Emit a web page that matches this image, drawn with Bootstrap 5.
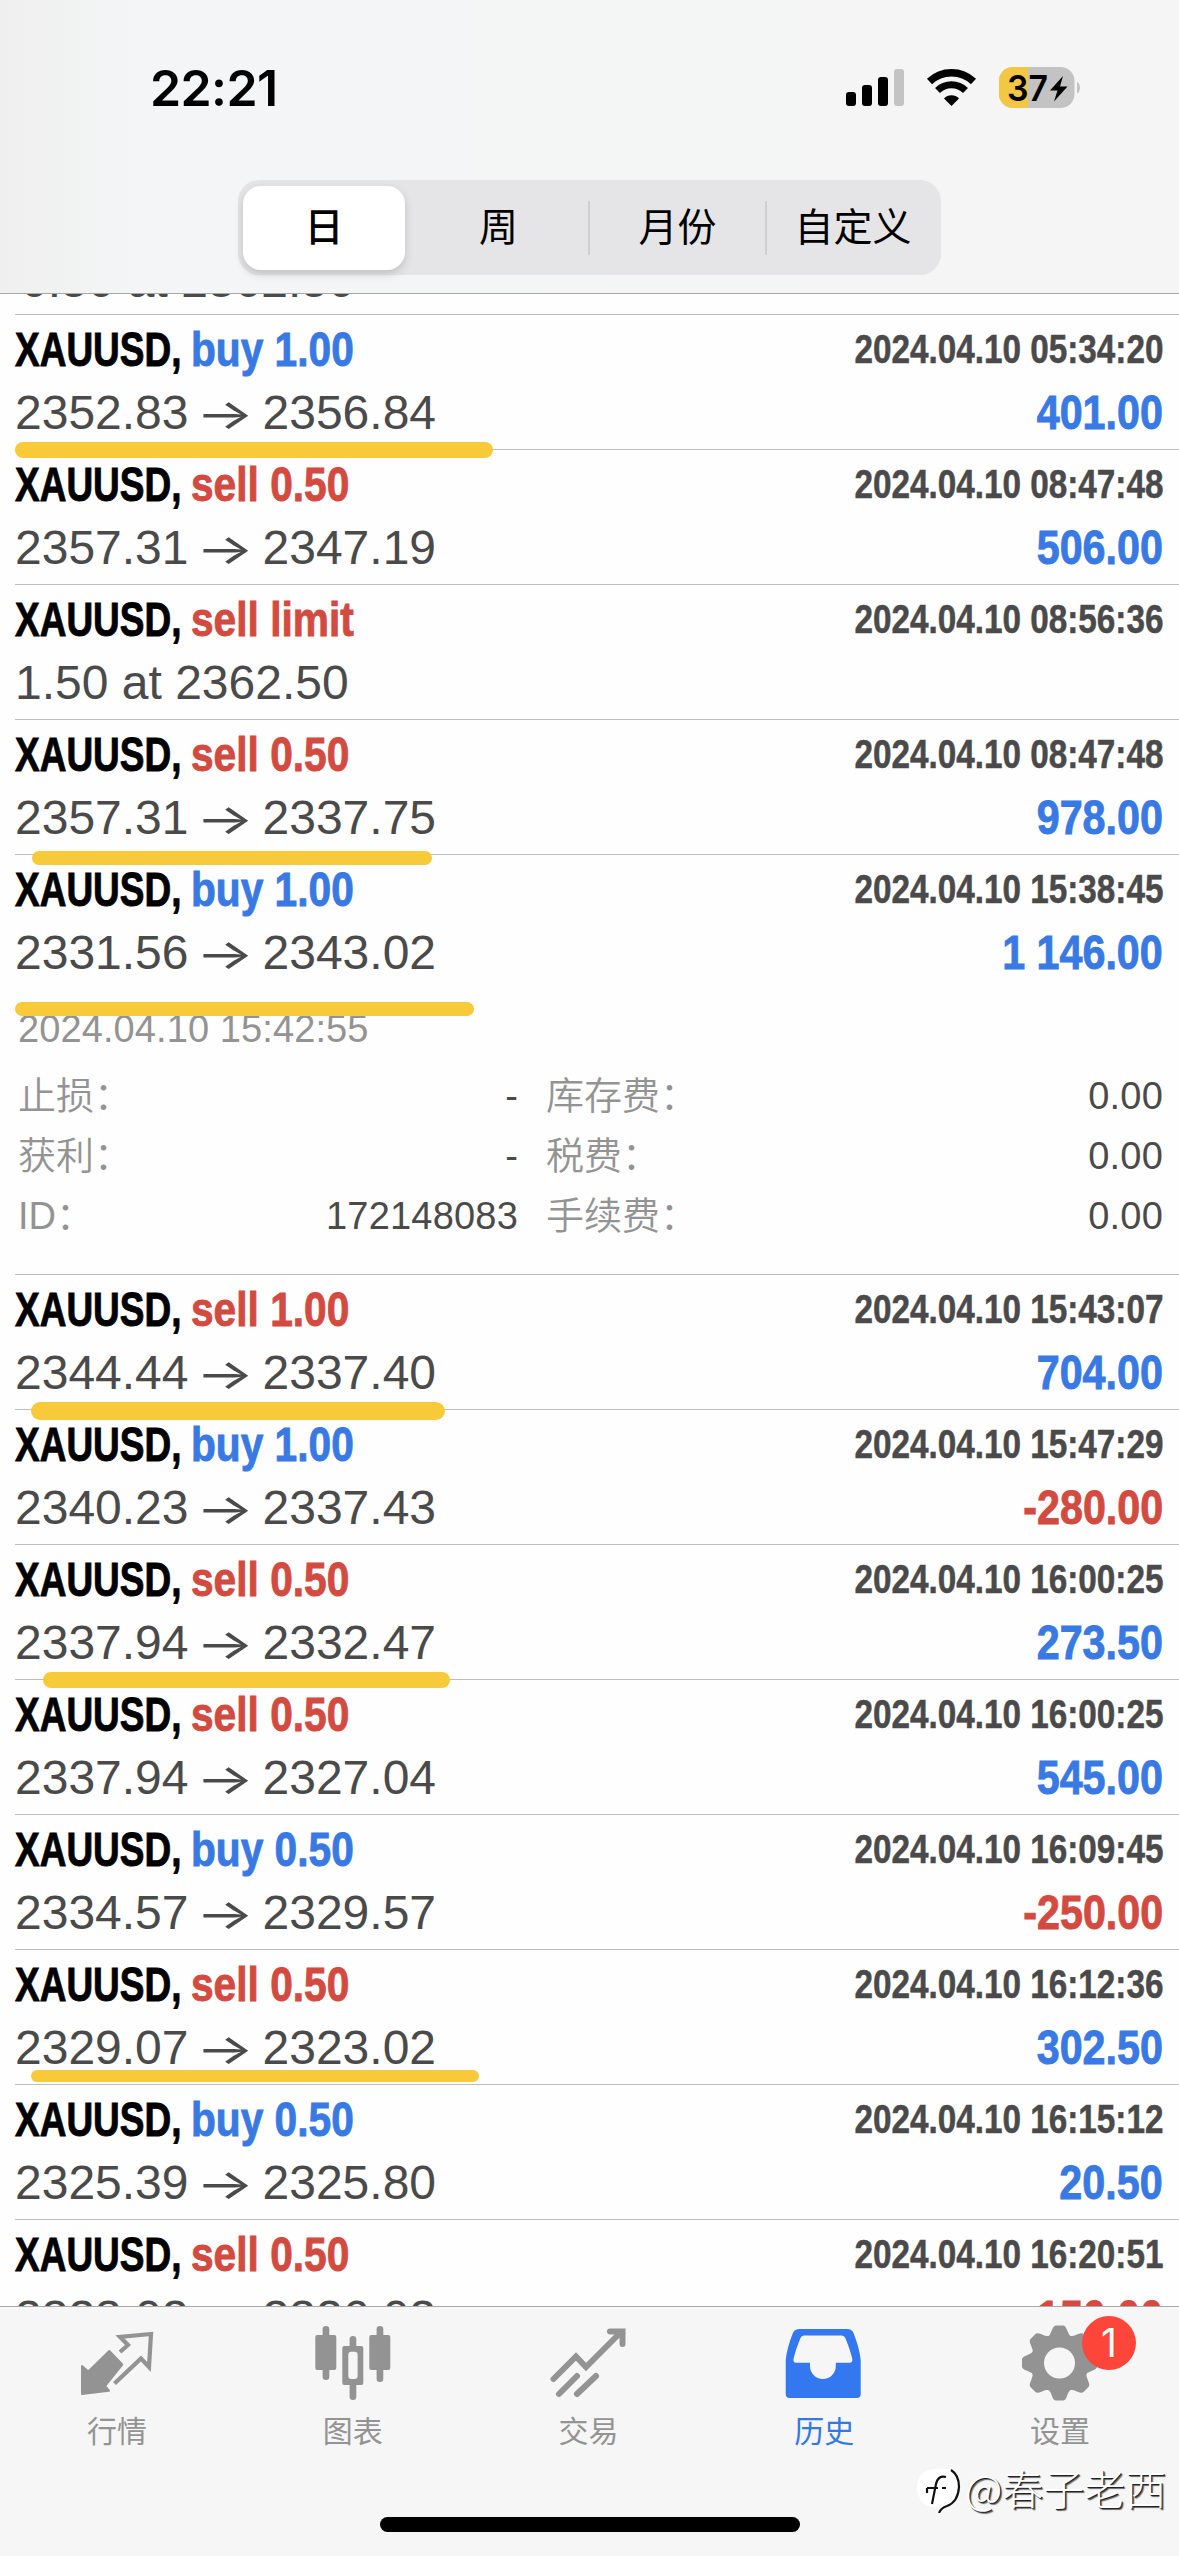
<!DOCTYPE html>
<html lang="zh-CN">
<head>
<meta charset="utf-8">
<title>历史</title>
<link href="https://cdn.jsdelivr.net/npm/bootstrap@5.3.0/dist/css/bootstrap.min.css" rel="stylesheet">
<style>
html,body{height:2556px;overflow:hidden}
body{width:1179px;margin:0;background:#fefefe;font-family:"Liberation Sans","Noto Sans CJK SC",sans-serif;color:#4a4a4a}
.app-top{height:294px;background:linear-gradient(90deg,#efefef,#f4f5f6 12%,#f5f5f5);border-bottom:1px solid #a9a9a9;position:relative;z-index:3;flex:none}
.status{height:180px;padding:66px 99px 0 150px}
.clock{font:600 50px/44px Inter,sans-serif;color:#000;letter-spacing:-.6px}
.sicons{margin-right:-4px}
.bat{font:600 36px Inter,sans-serif}
.seg{width:703px;height:95px;margin-left:238px;padding-left:5px;border-radius:21px;background:#e5e5e7}
.seg div{flex:none;height:84px;line-height:77px;text-align:center;font-size:39px;color:#000;font-family:"Noto Sans CJK SC",sans-serif}
.seg .on{width:162px;margin-right:4px;background:#fff;border-radius:18px;box-shadow:0 4px 10px rgba(0,0,0,.16);font-weight:500}
.s2{width:179px}.s3{width:175px}.s4{width:172px}
.seg i{flex:none;width:2px;height:54px;background:#cfcfd2}
.feed{height:2012px;overflow:hidden;flex:none}
.peek{height:40px;margin:-34px 0 14px 21px}
.deal{height:135px;margin-left:15px;padding:14px 16px 0 0;border-top:1px solid #bdbdbd;position:relative}
.ttl{height:40px}
.val{height:60px;margin-top:23px}
.deal.open{height:420px}
.t{font-size:49px;line-height:40px;font-weight:700;white-space:nowrap;color:#000;-webkit-text-stroke:.9px currentColor}
.t span{display:inline-block;transform-origin:0 50%}
.sy{width:176px;transform:scaleX(.755)}
.k{transform:scaleX(.83)}
.buy{color:#3879e3}.sell{color:#d24a40}
.dt{font-size:40px;line-height:40px;font-weight:700;transform:scaleX(.832);transform-origin:100% 50%;white-space:nowrap;-webkit-text-stroke:.5px currentColor}
.pr{font-size:48px;line-height:42px;white-space:pre}
.ar{font:400 42px/40px Inter,sans-serif;display:inline-block;width:74px;text-align:center;transform:translateX(-1px) scaleX(1.46)}
.pl{font-size:49px;line-height:41px;font-weight:700;transform:scaleX(.842);transform-origin:100% 50%;white-space:nowrap;-webkit-text-stroke:.9px currentColor}
.hl{position:absolute;border-radius:9px;background:#f8ca3a;z-index:2}
.h1a{left:0;top:127px;width:478px;height:16px}
.h2a{left:17px;top:131px;width:400px;height:14px}
.h3a{left:0;top:147px;width:459px;height:14px}
.h4a{left:16px;top:127px;width:414px;height:18px}
.h5a{left:28px;top:127px;width:407px;height:16px}
.h6a{left:16px;top:120px;width:448px;height:12px}
.more{font-size:38px;font-weight:350;color:#939393;padding:15px 0 0 3px}
.cl{line-height:44px;height:44px;margin-bottom:15px;font-weight:400;letter-spacing:.1px}
.ln{height:60px;line-height:60px}
.more b{font-weight:400;color:#4a4a4a;letter-spacing:.2px}
.c1{width:500px}.c2{width:617px;margin-left:28px}
.tabs{height:250px;background:#f6f6f6;border-top:1px solid #a9a9a9;position:relative;flex:none}
.tab{width:235.8px;color:#939393;font:400 30px/36px "Noto Sans CJK SC",sans-serif;padding-top:13px}
.tab svg{width:84px;height:84px;display:block;margin-bottom:7px}
.tab span{margin-left:-2px}
.tab.cur{color:#3478e8}
.num{position:absolute;left:1082px;top:9px;width:54px;height:54px;border-radius:50%;background:#fd453a;color:#fff;font:400 39px/54px Inter,sans-serif;text-align:center}
.home{position:absolute;left:380px;top:210px;width:420px;height:15px;border-radius:8px;background:#000}
.wm{position:absolute;left:913px;top:154px;color:#fff;font:300 41px/52px "Noto Sans CJK SC",sans-serif;text-shadow:1px 1px 0 #222,2px 2px 1px #666;white-space:nowrap}
</style>
</head>
<body class="d-flex flex-column">
<header class="app-top">
<div class="status d-flex justify-content-between align-items-start">
<div class="clock">22:21</div>
<svg class="sicons" width="244" height="46" viewBox="0 0 244 46">
<rect x="6" y="26" width="10" height="14" rx="3"/><rect x="22" y="19" width="10" height="21" rx="3"/><rect x="38" y="11" width="10" height="29" rx="3"/><rect x="54" y="3" width="10" height="37" rx="3" fill="#c3c3c3"/>
<path d="M89.5 15.5a32 32 0 0 1 44 0" fill="none" stroke="#000" stroke-width="7.4"/>
<path d="M97.5 24.5a20 20 0 0 1 28 0" fill="none" stroke="#000" stroke-width="7"/>
<path d="M111.500 40l-7.500-7.600a10.500 10.500 0 0 1 15 0z"/>
<clipPath id="bc"><rect x="159" y="1" width="75.500" height="41" rx="14"/></clipPath>
<g clip-path="url(#bc)"><rect x="158" y="0" width="80" height="44" fill="#c3c3c3"/><rect x="158" y="0" width="30" height="44" fill="#f3c743"/></g>
<path d="M237 16c4 1.500 4 10 0 11.500z" fill="#c3c3c3"/>
<text class="bat" x="167" y="34.500" textLength="41" lengthAdjust="spacingAndGlyphs">37</text>
<path d="M223 10l-13 14.500h7.500l-3.500 11 13.500-15h-7.500z"/>
</svg>
</div>
<div class="seg d-flex align-items-center"><div class="on">日</div><div class="s2">周</div><i></i><div class="s3">月份</div><i></i><div class="s4">自定义</div></div>
</header>
<main class="feed">
<div class="peek pr">0.50 at 2362.50</div>
<section class="deal"><div class="ttl d-flex justify-content-between"><div class="t"><span class="sy">XAUUSD,</span><span class="k buy">buy 1.00</span></div><div class="dt">2024.04.10 05:34:20</div></div><div class="val d-flex justify-content-between"><div class="pr">2352.83<span class="ar">→</span>2356.84</div><div class="pl buy">401.00</div></div><div class="hl h1a"></div></section>
<section class="deal"><div class="ttl d-flex justify-content-between"><div class="t"><span class="sy">XAUUSD,</span><span class="k sell">sell 0.50</span></div><div class="dt">2024.04.10 08:47:48</div></div><div class="val d-flex justify-content-between"><div class="pr">2357.31<span class="ar">→</span>2347.19</div><div class="pl buy">506.00</div></div></section>
<section class="deal"><div class="ttl d-flex justify-content-between"><div class="t"><span class="sy">XAUUSD,</span><span class="k sell">sell limit</span></div><div class="dt">2024.04.10 08:56:36</div></div><div class="val d-flex justify-content-between"><div class="pr">1.50 at 2362.50</div></div></section>
<section class="deal"><div class="ttl d-flex justify-content-between"><div class="t"><span class="sy">XAUUSD,</span><span class="k sell">sell 0.50</span></div><div class="dt">2024.04.10 08:47:48</div></div><div class="val d-flex justify-content-between"><div class="pr">2357.31<span class="ar">→</span>2337.75</div><div class="pl buy">978.00</div></div><div class="hl h2a"></div></section>
<section class="deal open"><div class="ttl d-flex justify-content-between"><div class="t"><span class="sy">XAUUSD,</span><span class="k buy">buy 1.00</span></div><div class="dt">2024.04.10 15:38:45</div></div><div class="val d-flex justify-content-between"><div class="pr">2331.56<span class="ar">→</span>2343.02</div><div class="pl buy">1 146.00</div></div><div class="hl h3a"></div>
<div class="more">
<div class="cl">2024.04.10 15:42:55</div>
<div class="ln d-flex"><div class="c1 d-flex justify-content-between"><span>止损：</span><b>-</b></div><div class="c2 d-flex justify-content-between"><span>库存费：</span><b>0.00</b></div></div>
<div class="ln d-flex"><div class="c1 d-flex justify-content-between"><span>获利：</span><b>-</b></div><div class="c2 d-flex justify-content-between"><span>税费：</span><b>0.00</b></div></div>
<div class="ln d-flex"><div class="c1 d-flex justify-content-between"><span>ID：</span><b>172148083</b></div><div class="c2 d-flex justify-content-between"><span>手续费：</span><b>0.00</b></div></div>
</div></section>
<section class="deal"><div class="ttl d-flex justify-content-between"><div class="t"><span class="sy">XAUUSD,</span><span class="k sell">sell 1.00</span></div><div class="dt">2024.04.10 15:43:07</div></div><div class="val d-flex justify-content-between"><div class="pr">2344.44<span class="ar">→</span>2337.40</div><div class="pl buy">704.00</div></div><div class="hl h4a"></div></section>
<section class="deal"><div class="ttl d-flex justify-content-between"><div class="t"><span class="sy">XAUUSD,</span><span class="k buy">buy 1.00</span></div><div class="dt">2024.04.10 15:47:29</div></div><div class="val d-flex justify-content-between"><div class="pr">2340.23<span class="ar">→</span>2337.43</div><div class="pl sell">-280.00</div></div></section>
<section class="deal"><div class="ttl d-flex justify-content-between"><div class="t"><span class="sy">XAUUSD,</span><span class="k sell">sell 0.50</span></div><div class="dt">2024.04.10 16:00:25</div></div><div class="val d-flex justify-content-between"><div class="pr">2337.94<span class="ar">→</span>2332.47</div><div class="pl buy">273.50</div></div><div class="hl h5a"></div></section>
<section class="deal"><div class="ttl d-flex justify-content-between"><div class="t"><span class="sy">XAUUSD,</span><span class="k sell">sell 0.50</span></div><div class="dt">2024.04.10 16:00:25</div></div><div class="val d-flex justify-content-between"><div class="pr">2337.94<span class="ar">→</span>2327.04</div><div class="pl buy">545.00</div></div></section>
<section class="deal"><div class="ttl d-flex justify-content-between"><div class="t"><span class="sy">XAUUSD,</span><span class="k buy">buy 0.50</span></div><div class="dt">2024.04.10 16:09:45</div></div><div class="val d-flex justify-content-between"><div class="pr">2334.57<span class="ar">→</span>2329.57</div><div class="pl sell">-250.00</div></div></section>
<section class="deal"><div class="ttl d-flex justify-content-between"><div class="t"><span class="sy">XAUUSD,</span><span class="k sell">sell 0.50</span></div><div class="dt">2024.04.10 16:12:36</div></div><div class="val d-flex justify-content-between"><div class="pr">2329.07<span class="ar">→</span>2323.02</div><div class="pl buy">302.50</div></div><div class="hl h6a"></div></section>
<section class="deal"><div class="ttl d-flex justify-content-between"><div class="t"><span class="sy">XAUUSD,</span><span class="k buy">buy 0.50</span></div><div class="dt">2024.04.10 16:15:12</div></div><div class="val d-flex justify-content-between"><div class="pr">2325.39<span class="ar">→</span>2325.80</div><div class="pl buy">20.50</div></div></section>
<section class="deal"><div class="ttl d-flex justify-content-between"><div class="t"><span class="sy">XAUUSD,</span><span class="k sell">sell 0.50</span></div><div class="dt">2024.04.10 16:20:51</div></div><div class="val d-flex justify-content-between"><div class="pr">2323.02<span class="ar">→</span>2326.02</div><div class="pl sell">-150.00</div></div></section>
</main>
<nav class="tabs d-flex">
<div class="tab d-flex flex-column align-items-center"><svg viewBox="0 0 84 84"><path d="M6 46l6.300 5.500L33.300 31l13 13.500L29 66l4 4.700L6 74z" fill="#939393" stroke="#939393" stroke-width="2" stroke-linejoin="round"/><path d="M44 32l8-7-8-8L75 14l-2 33-8-8.500-26.500 25" fill="none" stroke="#939393" stroke-width="4.200"/></svg><span>行情</span></div>
<div class="tab d-flex flex-column align-items-center"><svg viewBox="0 0 84 84" fill="#939393"><rect x="3.300" y="15" width="21" height="35" rx="2"/><rect x="10.600" y="6" width="6.700" height="54" rx="3.300"/><rect x="57.300" y="15" width="21" height="35" rx="2"/><rect x="64.600" y="6" width="6.700" height="56" rx="3.300"/><rect x="37.600" y="16" width="6.700" height="64" rx="3.300"/><rect x="30.300" y="26" width="21" height="39" rx="2"/><rect x="36.300" y="31.700" width="9.300" height="27.300" rx="3" fill="#f6f6f6"/></svg><span>图表</span></div>
<div class="tab d-flex flex-column align-items-center"><svg viewBox="0 0 84 84" fill="none" stroke="#939393" stroke-width="6" stroke-linecap="round"><path d="M6.500 59L29 36.500l10 10.500L74 12M63 11.500h12.500V24M12 74l18-18M30 74l19-18"/></svg><span>交易</span></div>
<div class="tab cur d-flex flex-column align-items-center"><svg viewBox="0 0 84 84" fill="#3478f0" fill-rule="evenodd"><path d="M17 9h47q5 0 6.500 4 6 15 7.200 27V74q0 4-4 4h-67q-4 0-4-4V40q1.200-12 7.200-27 1.500-4 7.100-4zM21 15.500q-2.500 0-3.500 2.500-5 12-7 21-.5 3.700 2.500 3.700h14v3.300a12.900 13 0 0 0 25.800 0v-3.300h14q3 0 2.500-3.700-2-9-7-21-1-2.500-3.500-2.500z"/></svg><span>历史</span></div>
<div class="tab d-flex flex-column align-items-center"><svg viewBox="0 0 84 84" fill="#939393"><defs><path id="th" d="M27.500 18q4-3 5.500-8 1.500-4.500 4-4.500h7q2.500 0 4 4.500 1.500 5 5.500 8l-13 25z"/></defs><circle cx="40.500" cy="43" r="29"/><use href="#th"/><use href="#th" transform="rotate(45 40.500 43)"/><use href="#th" transform="rotate(90 40.500 43)"/><use href="#th" transform="rotate(135 40.500 43)"/><use href="#th" transform="rotate(180 40.500 43)"/><use href="#th" transform="rotate(225 40.500 43)"/><use href="#th" transform="rotate(270 40.500 43)"/><use href="#th" transform="rotate(315 40.500 43)"/><circle cx="40.500" cy="43" r="15.500" fill="#f6f6f6"/></svg><span>设置</span></div>
<div class="num">1</div>
<div class="home"></div>
<div class="wm d-flex align-items-center"><svg width="52" height="52" viewBox="0 0 52 52"><path d="M20 8h16q10 3 10 18-1 15-11 19l-9 7 2-6H18Q4 42 4 26 5 10 20 8z" fill="#fff"/><path d="M38 9q8 5 8 17-1 15-12 19-6 2-8 7M33 16q-8-2-10 7l-4 20M14 27h11M29 27h4M14 27v5" fill="none" stroke="#111" stroke-width="2.200"/></svg><span>@春子老西</span></div>
</nav>
</body></html>
